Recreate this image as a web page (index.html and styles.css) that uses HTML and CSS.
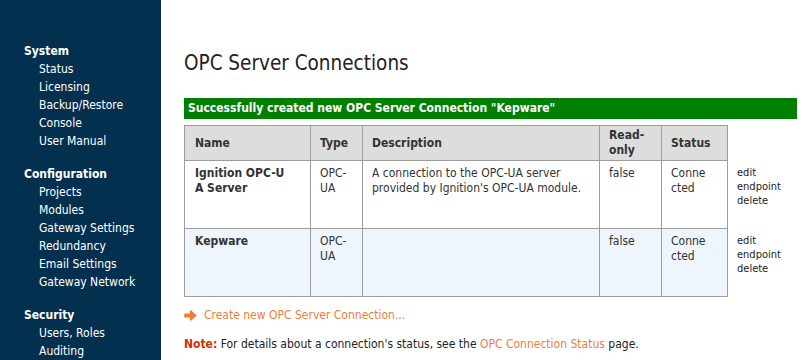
FILE: index.html
```html
<!DOCTYPE html>
<html lang="en">
<head>
  <meta charset="UTF-8" />
  <title>OPC Server Connections - Gateway</title>
  <link rel="stylesheet" href="styles.css">
</head>
<body>
  <div class="layout">
    <nav class="sidebar">
      <div class="nav-group">
        <div class="nav-title">System</div>
        <a href="#">Status</a>
        <a href="#">Licensing</a>
        <a href="#">Backup/Restore</a>
        <a href="#">Console</a>
        <a href="#">User Manual</a>
      </div>
      <div class="nav-group">
        <div class="nav-title">Configuration</div>
        <a href="#">Projects</a>
        <a href="#">Modules</a>
        <a href="#">Gateway Settings</a>
        <a href="#">Redundancy</a>
        <a href="#">Email Settings</a>
        <a href="#">Gateway Network</a>
      </div>
      <div class="nav-group">
        <div class="nav-title">Security</div>
        <a href="#">Users, Roles</a>
        <a href="#">Auditing</a>
      </div>
    </nav>

    <main class="content">
      <h1>OPC Server Connections</h1>

      <div class="msg-success">Successfully created new OPC Server Connection "Kepware"</div>

      <table class="list">
        <colgroup>
          <col class="col-name">
          <col class="col-type">
          <col class="col-desc">
          <col class="col-ro">
          <col class="col-status">
          <col class="col-actions">
        </colgroup>
        <thead>
          <tr>
            <th>Name</th>
            <th>Type</th>
            <th>Description</th>
            <th>Read-only</th>
            <th>Status</th>
            <th class="actions"></th>
          </tr>
        </thead>
        <tbody>
          <tr>
            <td class="name">Ignition OPC-UA Server</td>
            <td>OPC-UA</td>
            <td>A connection to the OPC-UA server provided by Ignition's OPC-UA module.</td>
            <td>false</td>
            <td class="status">Connected</td>
            <td class="actions">
              <a href="#">edit</a>
              <a href="#">endpoint</a>
              <a href="#">delete</a>
            </td>
          </tr>
          <tr class="alt">
            <td class="name">Kepware</td>
            <td>OPC-UA</td>
            <td></td>
            <td>false</td>
            <td class="status">Connected</td>
            <td class="actions">
              <a href="#">edit</a>
              <a href="#">endpoint</a>
              <a href="#">delete</a>
            </td>
          </tr>
        </tbody>
      </table>

      <p class="create-link">
        <svg width="13" height="13" viewBox="0 0 13 13">
          <path d="M1 5.2h5.6V2L11.8 6.5 6.6 11V7.8H1z" fill="#ef7d33" stroke="#ef7d33" stroke-width="1.6" stroke-linejoin="round"/>
        </svg>
        <a href="#">Create new OPC Server Connection...</a>
      </p>

      <p class="note"><b>Note:</b> For details about a connection's status, see the <a href="#">OPC Connection Status</a> page.</p>
    </main>
  </div>
</body>
</html>
```

FILE: styles.css
```css
body {
  margin: 0;
  font-family: Tahoma, "DejaVu Sans Condensed", "DejaVu Sans", sans-serif;
  font-stretch: condensed;
  font-size: 12px;
  color: #222;
  background: #fff;
}

.layout {
  display: flex;
  height: 360px;
  overflow: hidden;
}

.sidebar {
  width: 161px;
  flex-shrink: 0;
  background: #04304f;
  padding-top: 42px;
  line-height: 18px;
}

.nav-group {
  margin-bottom: 15px;
}

.nav-title {
  padding-left: 24px;
  font-weight: bold;
  color: #fff;
}

.nav-group a {
  display: block;
  padding-left: 39px;
  color: #fff;
  text-decoration: none;
}

.content {
  flex: 1;
  min-width: 0;
  padding: 50px 10px 0 23px;
}

h1 {
  margin: 0;
  font-size: 20.5px;
  line-height: 26px;
  font-weight: normal;
  color: #222;
}

.msg-success {
  margin-top: 22px;
  background: #008000;
  color: #fff;
  font-weight: bold;
  line-height: 15px;
  padding: 3px 4px;
}

.list {
  margin-top: 6px;
  border-collapse: collapse;
  table-layout: fixed;
  width: 613px;
}

.col-name { width: 126px; }
.col-type { width: 52px; }
.col-desc { width: 237px; }
.col-ro { width: 62px; }
.col-status { width: 66px; }
.col-actions { width: 70px; }

.list th,
.list td {
  border: 1px solid #9c9c9c;
  text-align: left;
  line-height: 15px;
  overflow-wrap: break-word;
}

.list th {
  background: #dddddd;
  padding: 2px 9px;
  height: 30px;
  color: #333;
}

.list td {
  vertical-align: top;
  padding: 5px 9px 0;
  color: #333;
}

.list td.name {
  font-weight: bold;
  padding-left: 10px;
  padding-right: 21px;
  word-break: break-all;
}

.list td.status {
  padding-right: 20px;
  word-break: break-all;
}

.list th:first-child {
  padding-left: 10px;
}

.list tr.alt td {
  background: #eef5fd;
}

.list th.actions,
.list td.actions,
.list tr.alt td.actions {
  border: none;
  background: #fff;
}

.list td.actions {
  padding: 5px 0 21px 9px;
  font-size: 11px;
  line-height: 14px;
}

.list td.actions a {
  display: block;
  color: #222;
  text-decoration: none;
}

.create-link {
  margin: 11px 0 0;
  display: flex;
  align-items: center;
  gap: 7px;
  line-height: 14px;
}

.create-link a,
.note a {
  color: #ef7d3c;
  text-decoration: none;
}

.note {
  margin: 15px 0 0;
  line-height: 14px;
}

.note b {
  color: #cc3300;
}
```
